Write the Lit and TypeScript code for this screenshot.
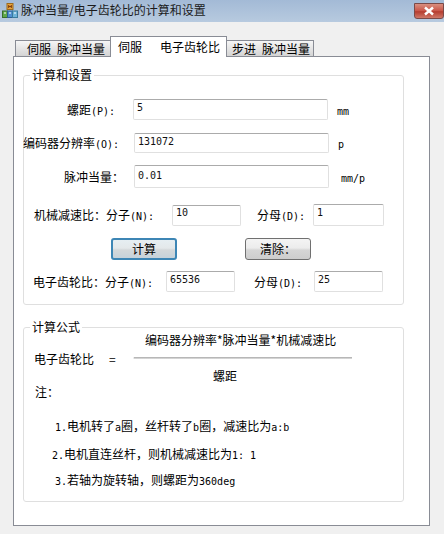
import { LitElement, html, css } from "lit";
import { customElement } from "lit/decorators.js";

const l = (s: string) => html`<span class="l">${s}</span>`;

@customElement("app-root")
export class AppRoot extends LitElement {
  static styles = css`
    :host {
      display: block;
      width: 444px;
      height: 534px;
      overflow: hidden;
      background: #f0f0f0;
      color: #000;
      opacity: 0.995;
      font: 12px/16px "Noto Sans CJK SC", "Liberation Sans", sans-serif;
    }
    .l {
      font: 10px/0 "DejaVu Sans Mono", "Liberation Mono", monospace;
      white-space: pre;
    }
    .titlebar {
      height: 22px;
      display: flex;
      align-items: flex-start;
      padding-left: 2px;
      background: linear-gradient(#a3bad6, #b7cadf);
      color: #1b1b1b;
    }
    .appicon {
      width: 16px;
      height: 16px;
      margin-top: 3px;
    }
    .title {
      margin-left: 3px;
      margin-top: 2px;
      flex: 1;
    }
    .close {
      width: 30px;
      height: 16px;
      margin: 3px 0 0 0;
      box-sizing: border-box;
      border: 1px solid #7b4a48;
      border-radius: 0 0 3px 3px;
      background: linear-gradient(#d98f80, #c9574a 48%, #b53d30 55%, #cf7868);
      display: flex;
      align-items: center;
      justify-content: center;
    }
    .tabs {
      display: flex;
      align-items: flex-end;
      height: 20px;
      margin: 14px 0 0 15px;
    }
    .tab {
      box-sizing: border-box;
      height: 16px;
      border: 1px solid #898c95;
      border-bottom: none;
      background: linear-gradient(#f6f6f6, #d4d4d4);
      line-height: 15px;
      white-space: pre;
    }
    .t1 {
      width: 95px;
      padding-left: 11px;
      border-right: none;
    }
    .t2 {
      width: 117px;
      height: 21px;
      margin-bottom: -1px;
      padding: 2px 0 0 7px;
      background: #fff;
      position: relative;
      z-index: 1;
    }
    .t3 {
      width: 87px;
      padding-left: 5px;
      border-left: none;
    }
    .page {
      box-sizing: border-box;
      width: 417px;
      height: 470px;
      margin-left: 13px;
      padding: 10px 0 0 9px;
      border: 1px solid #898c95;
      background: #fff;
    }
    fieldset {
      box-sizing: border-box;
      width: 381px;
      margin: 0;
      padding: 0;
      border: 1px solid #dfdfdf;
      border-radius: 3px;
      display: block;
    }
    legend {
      margin-left: 6px;
      padding: 0 2px;
      line-height: 16px;
    }
    .g1 {
      height: 238px;
    }
    .g2 {
      height: 183px;
      margin-top: 14px;
    }
    .row {
      display: grid;
      align-items: center;
    }
    .lab {
      justify-self: end;
      white-space: pre;
    }
    input {
      box-sizing: border-box;
      display: block;
      width: 100%;
      margin: 0;
      border: 1px solid #e0e0e0;
      border-top-color: #ababab;
      border-radius: 2px;
      outline: none;
      background: #fff;
      color: #111;
      font: 10px/12px "DejaVu Sans Mono", "Liberation Mono", monospace;
    }
    .r1 {
      grid-template-columns: 109px 195px auto;
      height: 21px;
      margin-top: 16px;
    }
    .r1 .lab {
      padding-right: 18px;
    }
    .r1 .unit {
      margin-left: 9px;
    }
    .r1 input {
      height: 21px;
      padding: 0 3px 5px;
    }
    .r2 {
      grid-template-columns: 110px 195px auto;
      height: 20px;
      margin-top: 13px;
    }
    .r2 .lab {
      padding-right: 15px;
    }
    .r2 .unit {
      margin-left: 9px;
    }
    .r2 input {
      height: 20px;
      padding: 0 3px 3px;
    }
    .r3 {
      grid-template-columns: 110px 195px auto;
      height: 23px;
      margin-top: 12px;
    }
    .r3 .lab {
      padding-right: 10px;
    }
    .r3 .unit {
      margin-left: 12px;
    }
    .r3 input {
      height: 23px;
      padding: 0 3px 3px;
    }
    .r4 {
      grid-template-columns: 148px 69px 72px 71px;
      height: 22px;
      margin-top: 16px;
    }
    .r4 .lab.a {
      padding-right: 18px;
    }
    .r4 .lab.b {
      padding-right: 8px;
    }
    .r4 input {
      height: 22px;
      padding: 0 3px 6px;
    }
    .r4 input.n {
      height: 21px;
      margin-top: 1px;
      padding: 0 3px 6px;
    }
    .btns {
      display: flex;
      gap: 68px;
      margin: 12px 0 0 87px;
    }
    .btn {
      box-sizing: border-box;
      width: 66px;
      height: 22px;
      border: 1px solid #707070;
      border-radius: 3px;
      background: linear-gradient(#f4f4f4 0, #ececec 45%, #d6d6d6 55%, #cdcdcd);
      text-align: center;
      line-height: 19px;
    }
    .btn.def {
      border: 2px solid #3d86b5;
      line-height: 17px;
      background: linear-gradient(#e6eef2 0, #e4e8ea 45%, #d4d8da 55%, #c6d2da);
    }
    .r6 {
      grid-template-columns: 142px 69px 79px 69px;
      height: 21px;
      margin-top: 11px;
    }
    .r6 .lab.a {
      padding-right: 13px;
    }
    .r6 .lab.b {
      padding-right: 12px;
    }
    .r6 input {
      height: 21px;
      padding: 0 3px 5px;
    }
    .formula {
      display: grid;
      grid-template-columns: 109px 219px;
      align-items: center;
      margin-top: -2px;
    }
    .fname {
      padding-left: 10px;
      white-space: pre;
    }
    .eq {
      margin-left: 15px;
    }
    .num {
      line-height: 14px;
      padding-left: 12px;
      white-space: pre;
    }
    .bar {
      height: 2px;
      margin: 10px 0 9px;
      background: linear-gradient(#a9a9a9, #e2e2e2);
      border-left: 1px solid #e8e8e8;
      border-radius: 2px 0 0 2px;
    }
    .den {
      padding-left: 80px;
      white-space: pre;
    }
    .note {
      white-space: pre;
    }
    .n0 {
      padding-left: 11px;
    }
    .n1 {
      padding-left: 31px;
      margin-top: 18px;
    }
    .n2 {
      padding-left: 28px;
      margin-top: 12px;
    }
    .n3 {
      padding-left: 31px;
      margin-top: 10px;
    }
  `;

  render() {
    return html`
      <div class="titlebar">
        <svg class="appicon" viewBox="0 0 16 16">
          <rect x="5" y="0.5" width="6" height="6" fill="#e8a33a" stroke="#9c6a1e" />
          <path d="M6.7 2v3M9.3 2v3M6.7 3.5h2.6" stroke="#7a3a10" fill="none" />
          <rect x="0.5" y="8" width="5" height="6.5" fill="#5fa84a" stroke="#3a6e2c" />
          <rect x="5.5" y="8" width="5" height="6.5" fill="#4f8fd0" stroke="#2d5f95" />
          <rect x="10.5" y="8" width="5" height="6.5" fill="#6fb3d9" stroke="#3a7a9c" />
          <path d="M2 10h2M7 10h2M12 10h2" stroke="#fff" />
        </svg>
        <div class="title">脉冲当量/电子齿轮比的计算和设置</div>
        <div class="close">
          <svg width="14" height="10" viewBox="0 0 14 10">
            <path d="M3 1.5l8 7M11 1.5l-8 7" stroke="#fff" stroke-width="2.4" fill="none" />
          </svg>
        </div>
      </div>
      <div class="tabs">
        <div class="tab t1">伺服${l(" ")}脉冲当量</div>
        <div class="tab t2">伺服${l("   ")}电子齿轮比</div>
        <div class="tab t3">步进${l(" ")}脉冲当量</div>
      </div>
      <div class="page">
        <fieldset class="g1">
          <legend>计算和设置</legend>
          <div class="row r1">
            <div class="lab">螺距${l("(P):")}</div>
            <input value="5" />
            <div class="unit">${l("mm")}</div>
          </div>
          <div class="row r2">
            <div class="lab">编码器分辨率${l("(O):")}</div>
            <input value="131072" />
            <div class="unit">${l("p")}</div>
          </div>
          <div class="row r3">
            <div class="lab">脉冲当量：</div>
            <input value="0.01" />
            <div class="unit">${l("mm/p")}</div>
          </div>
          <div class="row r4">
            <div class="lab a">机械减速比：分子${l("(N):")}</div>
            <input class="n" value="10" />
            <div class="lab b">分母${l("(D):")}</div>
            <input value="1" />
          </div>
          <div class="btns">
            <div class="btn def">计算</div>
            <div class="btn">清除：</div>
          </div>
          <div class="row r6">
            <div class="lab a">电子齿轮比：分子${l("(N):")}</div>
            <input value="65536" />
            <div class="lab b">分母${l("(D):")}</div>
            <input value="25" />
          </div>
        </fieldset>
        <fieldset class="g2">
          <legend>计算公式</legend>
          <div class="formula">
            <div class="fname">电子齿轮比<span class="eq">=</span></div>
            <div>
              <div class="num">编码器分辨率*脉冲当量*机械减速比</div>
              <div class="bar"></div>
              <div class="den">螺距</div>
            </div>
          </div>
          <div class="note n0">注：</div>
          <div class="note n1">${l("1.")}电机转了${l("a")}圈，丝杆转了${l("b")}圈，减速比为${l("a:b")}</div>
          <div class="note n2">${l("2.")}电机直连丝杆，则机械减速比为${l("1: 1")}</div>
          <div class="note n3">${l("3.")}若轴为旋转轴，则螺距为${l("360deg")}</div>
        </fieldset>
      </div>
    `;
  }
}
